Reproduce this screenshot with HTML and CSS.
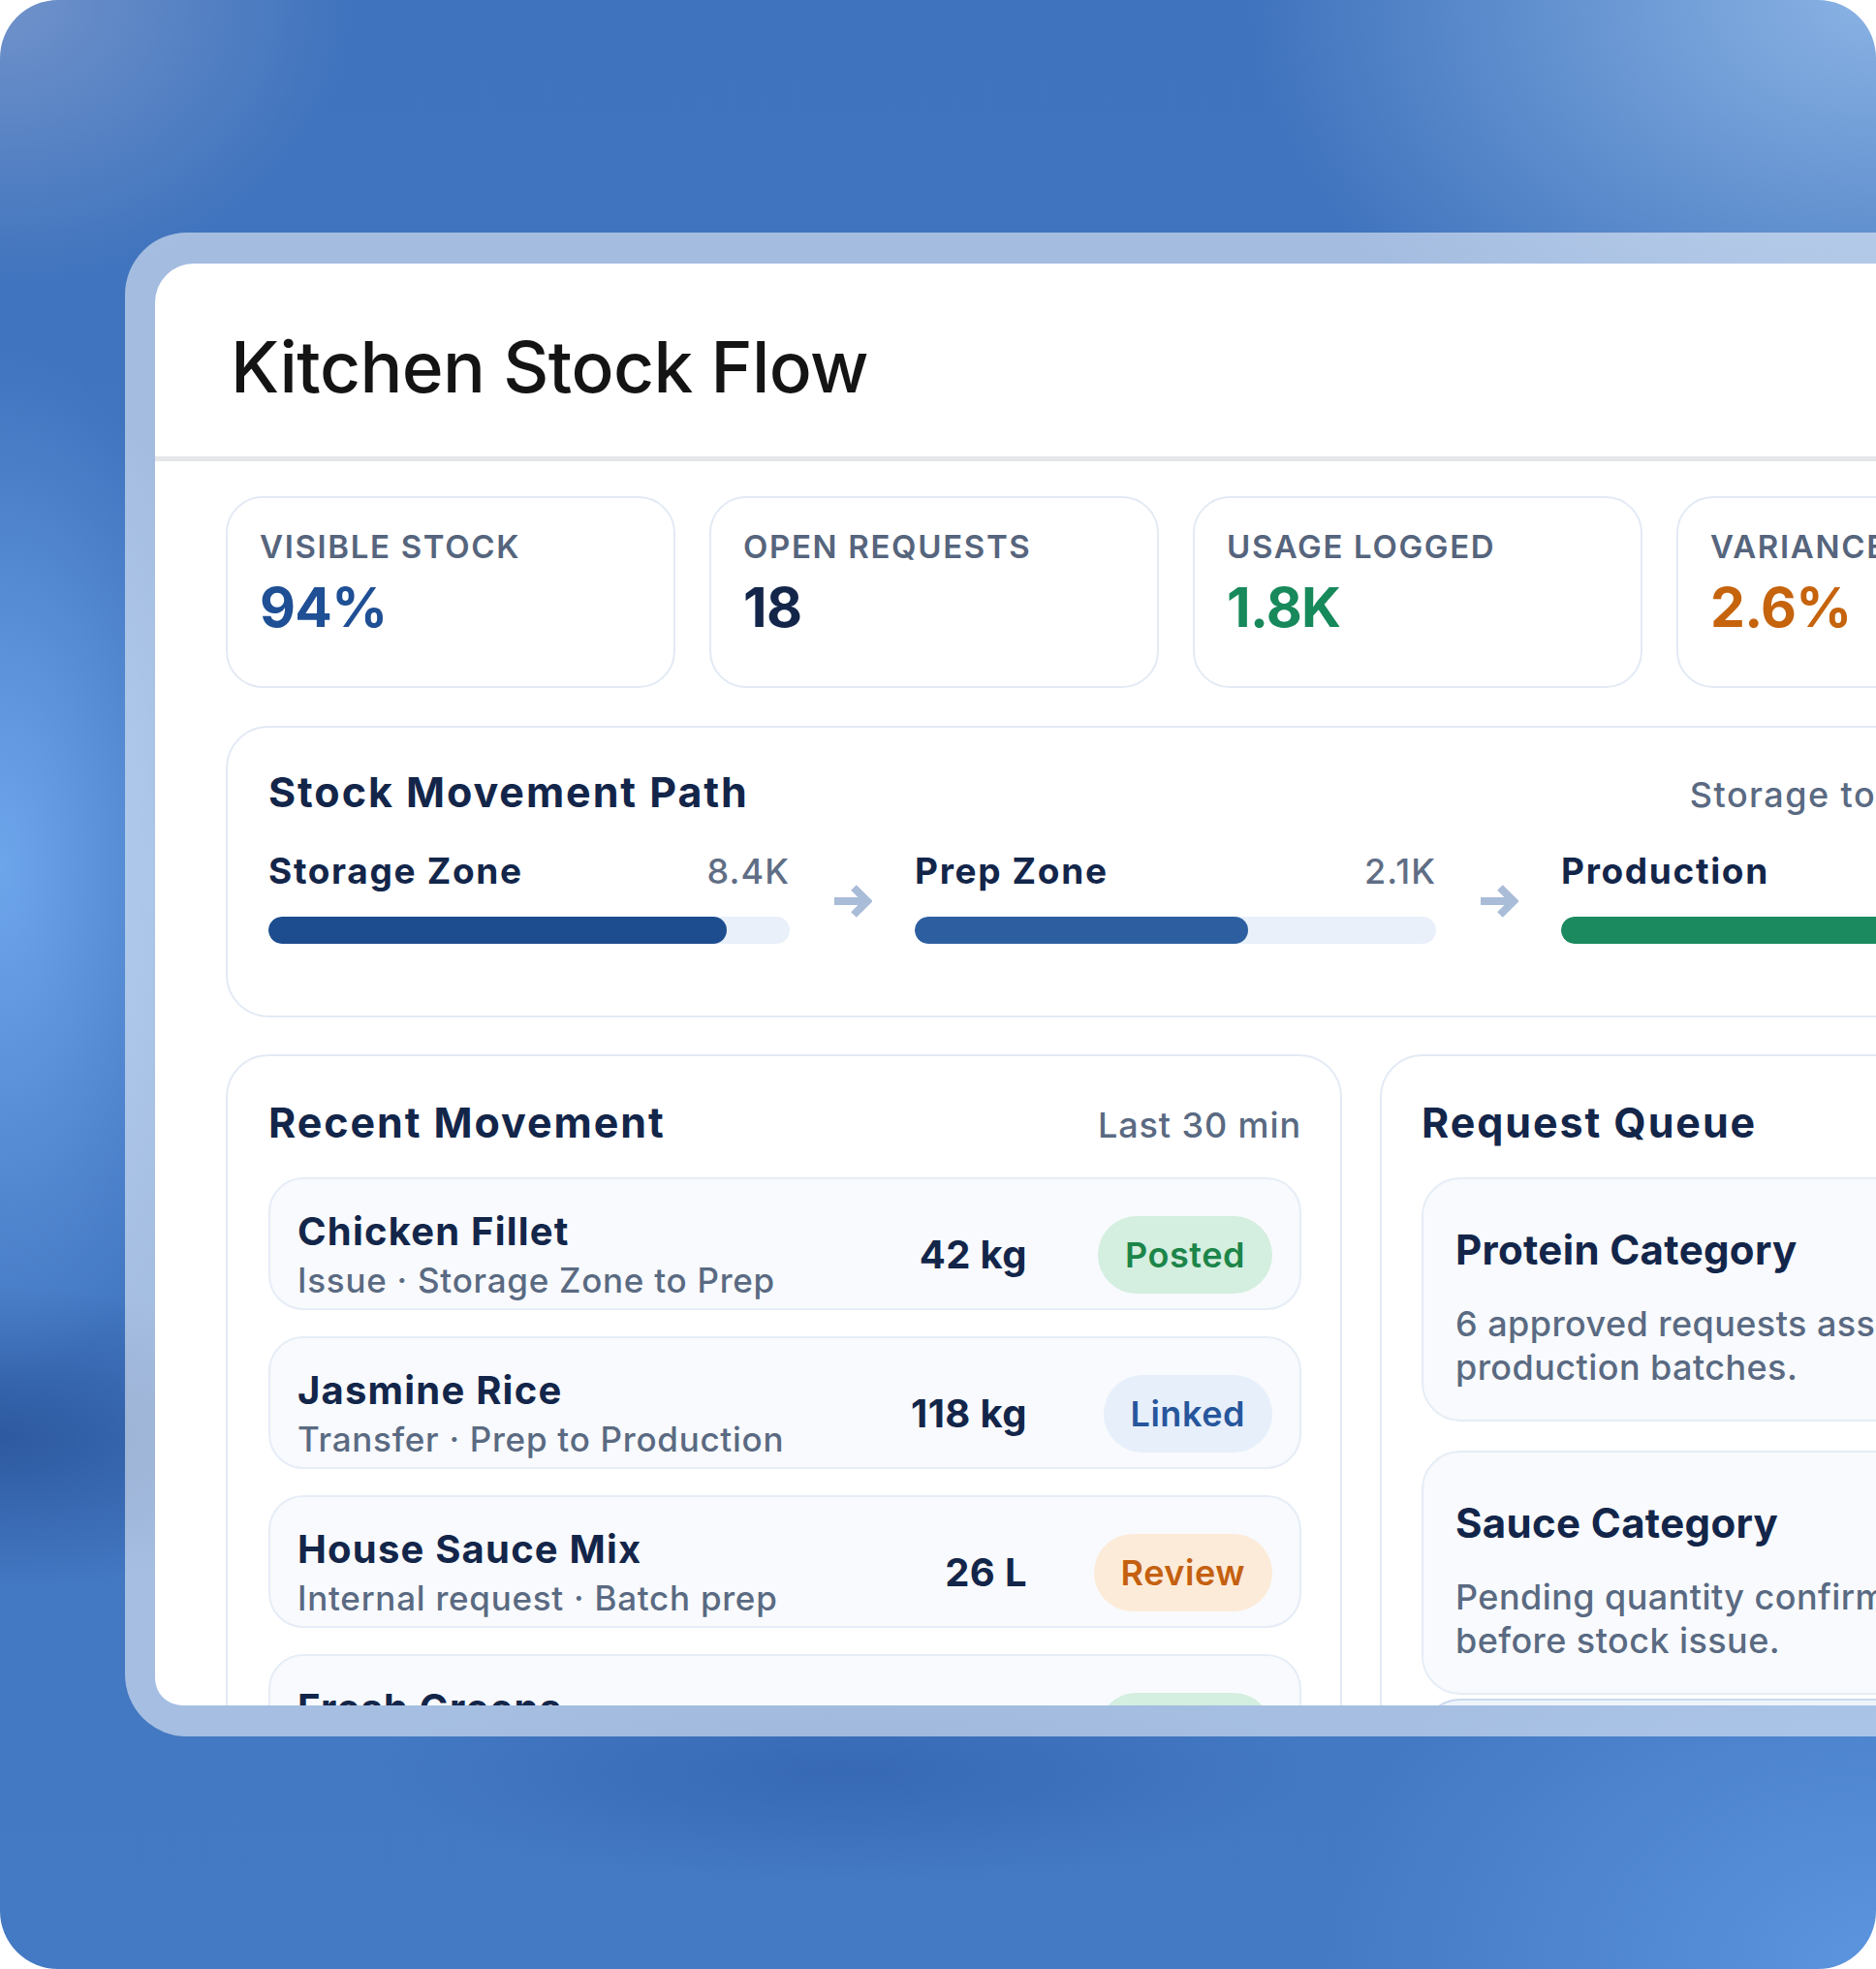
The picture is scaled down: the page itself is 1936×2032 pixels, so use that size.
FILE: index.html
```html
<!DOCTYPE html>
<html lang="en">
<head>
    <meta charset="UTF-8">
    <title>Kitchen Stock Flow</title>
    <link rel="stylesheet" href="styles.css">
</head>
<body>
<div class="canvas">
    <div class="frame">
        <div class="panel">
            <header class="panel-head">
                <h1>Kitchen Stock Flow</h1>
            </header>

            <div class="panel-body">
                <!-- top counters -->
                <div class="stats">
                    <div class="stat">
                        <div class="stat-label">Visible Stock</div>
                        <div class="stat-value blue">94%</div>
                    </div>
                    <div class="stat">
                        <div class="stat-label">Open Requests</div>
                        <div class="stat-value navy">18</div>
                    </div>
                    <div class="stat">
                        <div class="stat-label">Usage Logged</div>
                        <div class="stat-value green">1.8K</div>
                    </div>
                    <div class="stat">
                        <div class="stat-label">Variance</div>
                        <div class="stat-value orange">2.6%</div>
                    </div>
                </div>

                <!-- storage -> prep -> production -->
                <section class="card path">
                    <div class="card-head">
                        <h2>Stock Movement Path</h2>
                        <span class="card-note">Storage to Production</span>
                    </div>
                    <div class="stages">
                        <div class="stage-col">
                            <div class="stage-top">
                                <span class="stage-name">Storage Zone</span>
                                <span class="stage-count">8.4K</span>
                            </div>
                            <div class="track"><div class="fill fill-storage" style="width: 88%"></div></div>
                        </div>
                        <div class="arrow">
                            <svg width="40" height="34" viewBox="0 0 40 34"><path d="M1 17H35M21 3L35 17L21 31" fill="none" stroke="#a9bcd8" stroke-width="8" stroke-linejoin="miter"/></svg>
                        </div>
                        <div class="stage-col">
                            <div class="stage-top">
                                <span class="stage-name">Prep Zone</span>
                                <span class="stage-count">2.1K</span>
                            </div>
                            <div class="track"><div class="fill fill-prep" style="width: 64%"></div></div>
                        </div>
                        <div class="arrow">
                            <svg width="40" height="34" viewBox="0 0 40 34"><path d="M1 17H35M21 3L35 17L21 31" fill="none" stroke="#a9bcd8" stroke-width="8" stroke-linejoin="miter"/></svg>
                        </div>
                        <div class="stage-col">
                            <div class="stage-top">
                                <span class="stage-name">Production</span>
                                <span class="stage-count">1.8K</span>
                            </div>
                            <div class="track"><div class="fill fill-prod" style="width: 92%"></div></div>
                        </div>
                    </div>
                </section>

                <div class="lower">
                    <section class="card movement">
                        <div class="card-head">
                            <h2>Recent Movement</h2>
                            <span class="card-note">Last 30 min</span>
                        </div>
                        <div class="rows">
                            <div class="row">
                                <div class="row-main">
                                    <div class="row-name">Chicken Fillet</div>
                                    <div class="row-sub">Issue · Storage Zone to Prep</div>
                                </div>
                                <div class="qty">42 kg</div>
                                <div class="badge-col"><span class="badge posted">Posted</span></div>
                            </div>
                            <div class="row">
                                <div class="row-main">
                                    <div class="row-name">Jasmine Rice</div>
                                    <div class="row-sub">Transfer · Prep to Production</div>
                                </div>
                                <div class="qty">118 kg</div>
                                <div class="badge-col"><span class="badge linked">Linked</span></div>
                            </div>
                            <div class="row">
                                <div class="row-main">
                                    <div class="row-name">House Sauce Mix</div>
                                    <div class="row-sub">Internal request · Batch prep</div>
                                </div>
                                <div class="qty">26 L</div>
                                <div class="badge-col"><span class="badge review">Review</span></div>
                            </div>
                            <div class="row">
                                <div class="row-main">
                                    <div class="row-name">Fresh Greens</div>
                                    <div class="row-sub">Receipt · Supplier to Storage</div>
                                </div>
                                <div class="qty">15 kg</div>
                                <div class="badge-col"><span class="badge posted">Posted</span></div>
                            </div>
                        </div>
                    </section>

                    <section class="card queue">
                        <div class="card-head">
                            <h2>Request Queue</h2>
                        </div>
                        <div class="queue-list">
                            <div class="queue-item">
                                <div class="queue-title">Protein Category</div>
                                <p class="queue-text">6 approved requests assigned to production batches.</p>
                            </div>
                            <div class="queue-item">
                                <div class="queue-title">Sauce Category</div>
                                <p class="queue-text">Pending quantity confirmation before stock issue.</p>
                            </div>
                        </div>
                        <div class="queue-more">
                            <div class="queue-title">Dry Goods</div>
                        </div>
                    </section>
                </div>
            </div>
        </div>
    </div>
</div>
</body>
</html>
```

FILE: styles.css
```css
*{
    margin: 0;
    padding: 0;
    box-sizing: border-box;
}
body{
    background: #ffffff;
    font-family: Inter, "Noto Sans", sans-serif;
    color: #13264a;
}
.canvas{
    width: 1936px;
    height: 2032px;
    border-radius: 60px;
    overflow: hidden;
    padding: 240px 0 0 129px;
    background:
        radial-gradient(ellipse 900px 620px at 100% 0%, rgba(142, 182, 230, 0.95), rgba(142, 182, 230, 0) 72%),
        radial-gradient(ellipse 520px 420px at 0% 0%, rgba(118, 150, 204, 0.9), rgba(118, 150, 204, 0) 70%),
        radial-gradient(ellipse 360px 760px at 0% 44%, rgba(112, 168, 238, 0.95), rgba(112, 168, 238, 0) 70%),
        radial-gradient(ellipse 520px 220px at 0% 73%, rgba(40, 82, 152, 0.8), rgba(40, 82, 152, 0) 70%),
        radial-gradient(ellipse 700px 160px at 45% 90%, rgba(44, 92, 168, 0.55), rgba(44, 92, 168, 0) 70%),
        radial-gradient(ellipse 820px 620px at 100% 100%, rgba(94, 150, 224, 0.95), rgba(94, 150, 224, 0) 70%),
        linear-gradient(180deg, #3f73bd 0%, #4479c3 100%);
}
.frame{
    width: 2400px;
    height: 1552px;
    padding: 32px 0 32px 31px;
    background: rgba(255, 255, 255, 0.52);
    border-radius: 64px 0 0 64px;
}
.panel{
    width: 2106px;
    height: 100%;
    background: #ffffff;
    border-radius: 40px 0 0 28px;
    overflow: hidden;
}
.panel-head{
    height: 204px;
    padding: 70px 0 0 78px;
    border-bottom: 5px solid #e4e6ea;
}
.panel-head h1{
    font-size: 73px;
    font-weight: 500;
    line-height: 1;
    letter-spacing: -0.008em;
    color: #141414;
}
.panel-body{
    padding: 36px 72px 0 73px;
}

/* counters */
.stats{
    display: grid;
    grid-template-columns: repeat(4, 464px);
    gap: 35px;
}
.stat{
    height: 198px;
    padding: 30px 33px;
    border: 2px solid #e3eaf4;
    border-radius: 38px;
}
.stat-label{
    font-size: 33px;
    font-weight: 600;
    line-height: 40px;
    letter-spacing: 0.05em;
    text-transform: uppercase;
    color: #56657d;
}
.stat-value{
    margin-top: 11px;
    font-size: 57px;
    font-weight: 700;
    line-height: 63px;
    letter-spacing: -0.012em;
}
.blue{ color: #1f4f94; }
.navy{ color: #13264a; }
.green{ color: #17895b; }
.orange{ color: #c6630d; }

/* cards */
.card{
    background: #ffffff;
    border: 2px solid #e3eaf4;
    border-radius: 44px;
}
.card-head{
    display: flex;
    justify-content: space-between;
    align-items: baseline;
}
.card-head h2{
    font-size: 43px;
    font-weight: 700;
    line-height: 52px;
    letter-spacing: 0.045em;
    color: #13264a;
}
.card-note{
    font-size: 36px;
    font-weight: 500;
    letter-spacing: 0.025em;
    color: #5a6a82;
}
.path .card-note{
    letter-spacing: 0.04em;
}

.path{
    margin-top: 39px;
    padding: 40px 43px 74px 42px;
}
.stages{
    display: flex;
    margin-top: 34px;
}
.stage-col{
    width: 538px;
    flex-shrink: 0;
}
.stage-top{
    display: flex;
    justify-content: space-between;
    align-items: baseline;
}
.stage-name{
    font-size: 37px;
    font-weight: 700;
    line-height: 44px;
    letter-spacing: 0.045em;
}
.stage-count{
    font-size: 36px;
    font-weight: 500;
    letter-spacing: 0.03em;
    color: #5f6e85;
}
.track{
    margin-top: 25px;
    height: 28px;
    border-radius: 14px;
    background: #e9f0f9;
    overflow: hidden;
}
.fill{
    height: 100%;
    border-radius: 14px;
}
.fill-storage{ background: #1e4d8f; }
.fill-prep{ background: #2d5fa0; }
.fill-prod{ background: #1b8a5e; }
.arrow{
    width: 129px;
    flex-shrink: 0;
    display: flex;
    justify-content: center;
    align-items: center;
    padding-top: 8px;
}

/* lower half */
.lower{
    display: grid;
    grid-template-columns: 1152px 770px;
    gap: 39px;
    margin-top: 38px;
    align-items: start;
}
.movement{
    padding: 42px 40px 40px 42px;
}
.rows{
    display: flex;
    flex-direction: column;
    gap: 27px;
    margin-top: 31px;
}
.row{
    height: 137px;
    display: flex;
    align-items: center;
    padding: 30px 28px 8px 28px;
    background: #f8fafd;
    border: 2px solid #e6edf6;
    border-radius: 36px;
}
.row-main{
    flex: 1;
}
.row-name{
    font-size: 40px;
    font-weight: 700;
    line-height: 50px;
    letter-spacing: 0.03em;
}
.row-sub{
    margin-top: 3px;
    font-size: 35px;
    font-weight: 500;
    line-height: 44px;
    letter-spacing: 0.021em;
    color: #5a6a82;
}
.qty{
    font-size: 40px;
    font-weight: 700;
    letter-spacing: 0.01em;
}
.badge-col{
    width: 183px;
    margin-left: 70px;
    display: flex;
    justify-content: flex-end;
}
.badge{
    height: 80px;
    padding: 0 28px;
    border-radius: 40px;
    display: flex;
    align-items: center;
    font-size: 36px;
    font-weight: 600;
    letter-spacing: 0.015em;
}
.posted{ background: #d4eedf; color: #1c8549; }
.linked{ background: #e7effb; color: #27569c; }
.review{ background: #fdebd9; color: #c4600f; }

.queue{
    padding: 42px 42px 40px 41px;
}
.queue-list{
    display: flex;
    flex-direction: column;
    gap: 30px;
    margin-top: 31px;
}
.queue-item{
    height: 252px;
    padding: 47px 35px 0 33px;
    background: #f8fafd;
    border: 2px solid #e6edf6;
    border-radius: 40px;
}
.queue-title{
    font-size: 42px;
    font-weight: 700;
    line-height: 52px;
    letter-spacing: 0.008em;
}
.queue-text{
    margin-top: 28px;
    font-size: 36px;
    font-weight: 500;
    line-height: 45px;
    letter-spacing: 0.012em;
    color: #5a6a82;
}
.queue-more{
    margin-top: 4px;
    height: 160px;
    padding: 47px 35px 0 33px;
    background: #eef3fb;
    border: 2px solid #c9d8ee;
    border-radius: 40px;
}
```
